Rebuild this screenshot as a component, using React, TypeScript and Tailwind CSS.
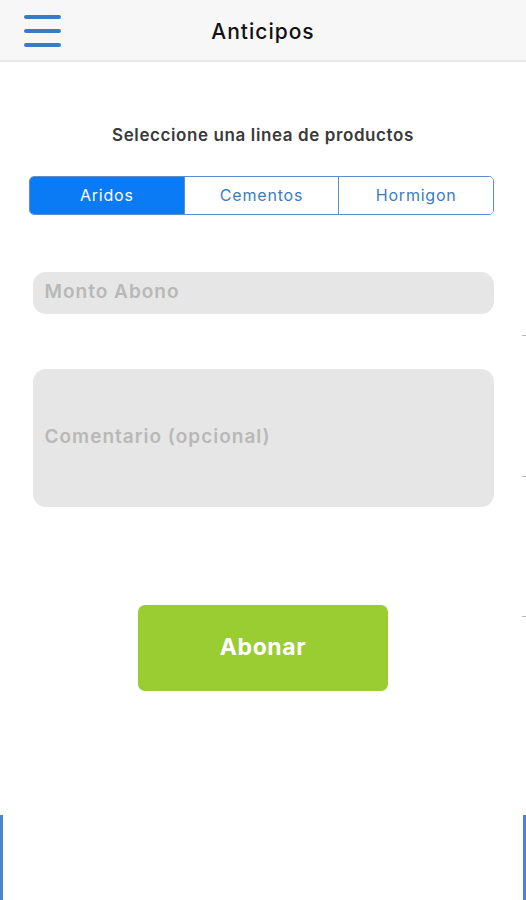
import React, { useState } from 'react';

const lines = ['Aridos', 'Cementos', 'Hormigon'];

export default function App() {
  const [active, setActive] = useState(0);

  return (
    <div className="relative w-[526px] h-[900px] bg-white overflow-hidden font-['Inter','Liberation_Sans',sans-serif]">
      {/* header */}
      <div className="h-[62px] bg-[#f7f7f7] border-b-2 border-[#e6e6e6] flex items-center relative">
        <button className="ml-[24px] mt-[1px] w-[37px] flex flex-col gap-[10px]">
          <span className="block h-[4px] rounded-full bg-[#3b7bc6]" />
          <span className="block h-[4px] rounded-full bg-[#3b7bc6]" />
          <span className="block h-[4px] rounded-full bg-[#3b7bc6]" />
        </button>
        <h1 className="absolute left-0 right-0 top-[19px] text-center text-[21px] leading-[26px] font-medium tracking-[1px] text-[#111] pointer-events-none">Anticipos</h1>
      </div>

      <div className="flex flex-col items-center">
        <p className="mt-[61px] text-[17px] font-semibold tracking-[0.6px] text-[#3a3a3a]">Seleccione una linea de productos</p>

        <div className="mt-[27px] w-[465px] h-[39px] ml-[-3px] flex rounded-[5px] border border-[#5a8fcc] overflow-hidden">
          {lines.map((l, i) => (
            <button
              key={l}
              onClick={() => setActive(i)}
              className={`flex-1 text-[16px] tracking-[0.8px] ${i > 0 ? 'border-l border-[#5a8fcc]' : ''} ${
                active === i ? 'bg-[#0a7bf5] text-white' : 'bg-white text-[#3b7cc2]'
              }`}
            >
              {l}
            </button>
          ))}
        </div>

        <div className="mt-[57px] w-[461px] h-[42px] rounded-[13px] bg-[#e6e6e6] flex items-center px-[12px]">
          <span className="text-[19px] font-semibold tracking-[1px] text-[#b8b8b8]">Monto Abono</span>
        </div>

        <div className="mt-[55px] w-[461px] h-[138px] rounded-[13px] bg-[#e6e6e6] flex items-center px-[12px]">
          <span className="text-[19px] font-semibold tracking-[1px] text-[#b8b8b8]">Comentario (opcional)</span>
        </div>

        <button className="mt-[98px] w-[250px] h-[86px] rounded-[7px] bg-[#9acd32] text-white text-[23px] font-bold tracking-[0.6px]">
          Abonar
        </button>
      </div>

      {/* edge marks */}
      <div className="absolute left-0 top-[815px] w-[3px] h-[85px] bg-[#4a86d0]" />
      <div className="absolute right-0 top-[815px] w-[3px] h-[85px] bg-[#4a86d0]" />
      <div className="absolute right-0 top-[335px] w-[4px] h-[1px] bg-[#bbb]" />
      <div className="absolute right-0 top-[476px] w-[4px] h-[1px] bg-[#bbb]" />
      <div className="absolute right-0 top-[616px] w-[4px] h-[1px] bg-[#bbb]" />
    </div>
  );
}
